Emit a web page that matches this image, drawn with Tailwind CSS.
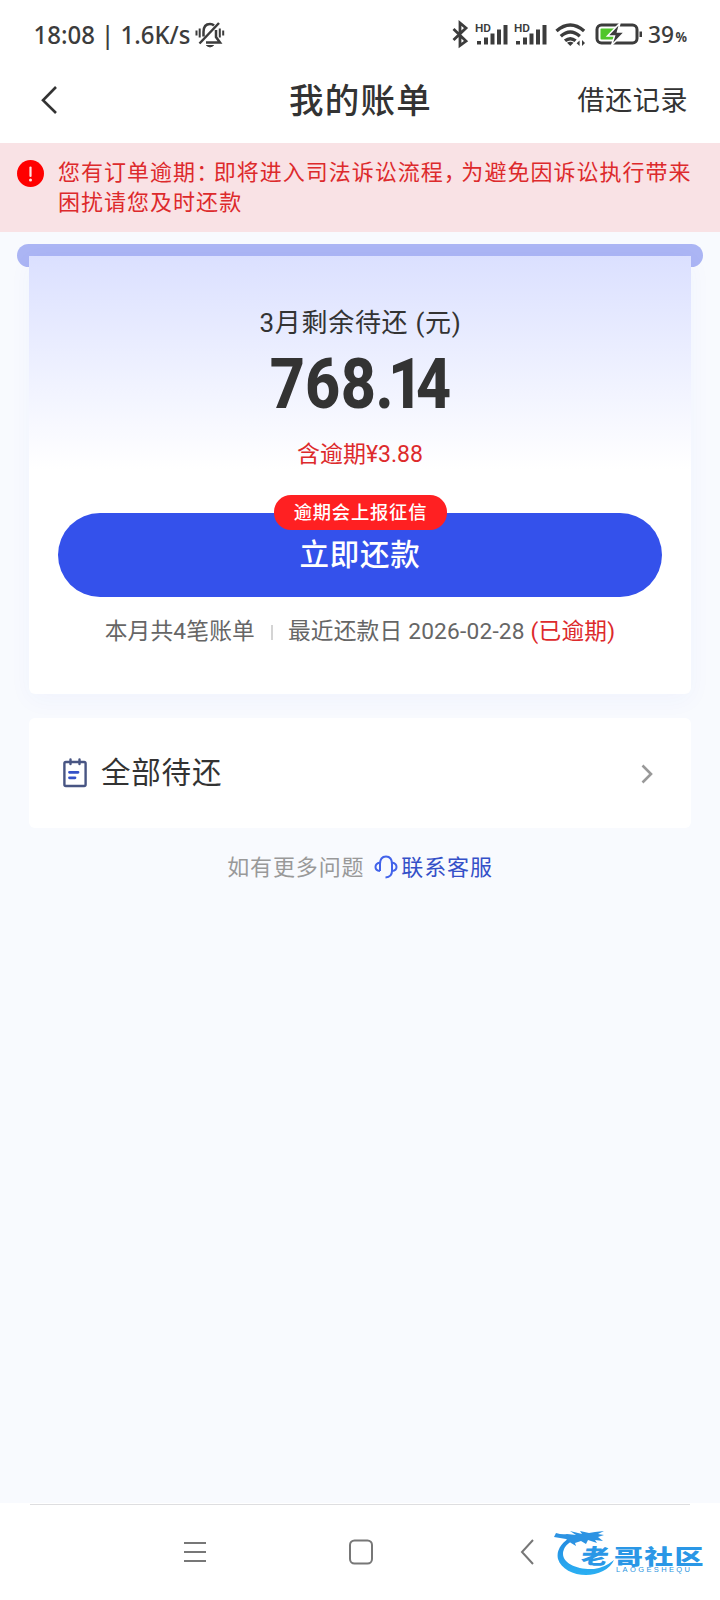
<!DOCTYPE html>
<html lang="zh-CN">
<head>
<meta charset="utf-8">
<title>我的账单</title>
<script src="https://cdn.jsdelivr.net/npm/@tailwindcss/browser@4"></script>
</head>
<body class="flex h-[1600px] w-[720px] flex-col overflow-hidden bg-[#f8fafe] font-['Roboto','Noto_Sans_CJK_SC',sans-serif] text-[#333] whitespace-nowrap">

<!-- status bar -->
<header class="flex h-[143px] shrink-0 flex-col bg-white">
  <div class="flex h-[69px] items-center justify-between pr-[32px] pl-[33px]">
    <div class="flex items-center gap-[4px]">
      <svg class="h-[40px] w-[158px] overflow-visible" viewBox="0 -5 158 40" fill="#3c3c3c"><text x="0.500" y="24" font-family="Noto Sans" font-weight="500" font-size="25.5" textLength="157" lengthAdjust="spacingAndGlyphs">18:08 | 1.6K/s</text></svg>
      <svg class="h-[28px] w-[30px]" viewBox="0 0 30 28" fill="none" stroke="#3c3c3c" stroke-width="2.500"><path d="M4.500 22.500 24 2"/><path d="M8.500 15.500V11C8.500 5.500 11 3 15 3Q17.500 3 19 4.500"/><path d="M21 9v7l4 5.500H11" /><path d="M11.500 24.500q3.500 3 7 0z" fill="#3c3c3c" stroke-width="1"/><path d="M4.700 7.500v9M1.500 9.500v5M24.800 7.500v9M28.200 9.500v5" stroke-width="2"/></svg>
    </div>
    <svg class="h-[40px] w-[238px]" viewBox="450 15 238 40">
      <path d="M453.500 29 466 41l-6 4.500V23l6 5-12.500 12" fill="none" stroke="#3c3c3c" stroke-width="2.800"/>
      <g fill="#3c3c3c">
        <text x="475" y="32" font-family="Roboto" font-weight="600" font-size="10.500" textLength="16" lengthAdjust="spacingAndGlyphs">HD</text>
        <path d="M477 41h4v3.500h-4zM484 37.500h4v7h-4zM490.500 33.500h4v11h-4zM497 29.500h4v15h-4zM503.500 25h4v19.500h-4z"/>
        <text x="514" y="32" font-family="Roboto" font-weight="600" font-size="10.500" textLength="16" lengthAdjust="spacingAndGlyphs">HD</text>
        <path d="M516 41h4v3.500h-4zM523 37.500h4v7h-4zM529.500 33.500h4v11h-4zM536 29.500h4v15h-4zM542.500 25h4v19.500h-4z"/>
      </g>
      <g fill="none" stroke="#3c3c3c" stroke-width="3.400"><path d="M556.500 31q13.800-12 27.600 0M560.800 36.300q9.500-8.500 19 0M565 40.800q5.300-4.300 10.600 0"/></g>
      <path d="M567 42.800q3.300-2.200 6.600 0l-3.300 3.300zM579.600 40.500v5.500l-3-2.800zM582 46v-6l3 3z" fill="#3c3c3c"/>
      <rect x="597" y="25" width="40" height="18" rx="4.500" fill="none" stroke="#3c3c3c" stroke-width="3"/>
      <path d="M639.500 31.500h2.500v5.500h-2.500z" fill="#3c3c3c"/>
      <rect x="600.500" y="28.500" width="16" height="11" rx="1" fill="#51c62b"/>
      <path d="m620 23-12.500 13h7l-3 9.500L624.500 32h-7z" fill="#3c3c3c" stroke="#fff" stroke-width="1.500"/>
      <text x="648" y="43" fill="#3c3c3c" font-family="Noto Sans" font-size="23" font-weight="500" textLength="26" lengthAdjust="spacingAndGlyphs">39</text>
      <text x="675.500" y="42" fill="#3c3c3c" font-family="Noto Sans" font-size="14" font-weight="700" textLength="11.500" lengthAdjust="spacingAndGlyphs">%</text>
    </svg>
  </div>
  <div class="grid h-[62px] grid-cols-[1fr_auto_1fr] items-center pr-[32px] pl-[40px]">
    <svg class="h-[28px] w-[18px]" viewBox="0 0 18 28" fill="none" stroke="#333" stroke-width="2.600"><path d="M16 1 3 14.300 16 27"/></svg>
    <h1 class="mt-px -ml-[7px] text-[34.5px] leading-[50px] font-medium tracking-[1.3px]">我的账单</h1>
    <div class="mt-[2px] text-right text-[27px] leading-[40px] tracking-[0.6px]">借还记录</div>
  </div>
</header>

<!-- overdue notice -->
<section class="flex h-[89px] shrink-0 gap-[14px] bg-[#f9e2e5] pt-[14px] pl-[17px] text-[22px] leading-[30px] tracking-[1.02px] text-[#dd2a2c]">
  <svg class="mt-[3px] h-[27px] w-[27px]" viewBox="0 0 27 27"><circle cx="13.500" cy="13.500" r="13.500" fill="#f00"/><path d="M13.500 7.500v8.500" stroke="#ffe5e5" stroke-width="2.200" stroke-linecap="round"/><circle cx="13.500" cy="20" r="1.500" fill="#ffe5e5"/></svg>
  <div class="pt-px">
    <p>您有订单逾期<span class="tracking-[-4.5px]">：</span>即将进入司法诉讼流程<span class="tracking-[-4.5px]">，</span>为避免因诉讼执行带来</p>
    <p>困扰请您及时还款</p>
  </div>
</section>

<main class="flex grow flex-col items-center pt-[12px]">
  <!-- current bill -->
  <div class="h-[23px] w-[686px] shrink-0 rounded-full bg-[#abb5f4]"></div>
  <section class="z-10 -mt-[11px] flex h-[438px] w-[662px] shrink-0 flex-col items-center rounded-b-[6px] bg-white bg-linear-to-b from-[#dbe0ff] to-white to-[214px] shadow-[0_6px_24px_rgba(52,81,235,0.04)]">
    <p class="mt-[47px] ml-px text-[26px] leading-[40px] tracking-[0.7px]">3月剩余待还 (元)</p>
    <svg class="mt-[3px] h-[80px] w-[190px] overflow-visible" viewBox="265 345 190 80" fill="#333"><text y="407" transform="translate(265 0) scale(.86 1)" x="5.500 46.500 88 128.500 143 175.500" font-family="Roboto" font-weight="800" font-size="71">768.14</text></svg>
    <p class="mt-[14px] text-[23px] leading-[30px] text-[#dd2a2c]">含逾期¥3.88</p>
    <div class="relative mt-[43px] flex h-[84px] w-[604px] items-center justify-center rounded-full bg-[#3451eb] text-[29.5px] font-medium tracking-[0.8px] text-white">
      <span class="mt-px">立即还款</span>
      <span class="absolute -top-[18px] left-[216px] flex h-[35px] w-[173px] items-center justify-center rounded-[17px] bg-[#ff2022] text-[18.3px] font-medium">逾期会上报征信</span>
    </div>
    <div class="mt-[20px] flex items-center text-[22.7px] leading-[30px] tracking-[0.2px] text-[#666]">
      <span>本月共4笔账单</span>
      <span class="mr-[15px] ml-[16px] h-[15px] w-[2px] bg-[#d4d4d4]"></span>
      <span>最近还款日 2026-02-28 <span class="text-[#dd2a2c]">(已逾期)</span></span>
    </div>
  </section>

  <!-- all outstanding -->
  <section class="mt-[24px] flex h-[110px] w-[662px] shrink-0 items-center rounded-[6px] bg-white pr-[38px] pl-[34px]">
    <svg class="h-[30px] w-[24px]" viewBox="0 0 24 30" fill="none" stroke="#485583" stroke-width="2.400" stroke-linejoin="round" stroke-linecap="round"><rect x="1.400" y="4" width="21.200" height="24" rx="1.500"/><path d="M7.500 1.500v4.500M16.500 1.500v4.500"/><path d="M6.500 14.300h8.500M6.500 19.800h5.500" stroke="#3451c8" stroke-width="2.800"/></svg>
    <span class="ml-[14px] grow text-[29.5px] leading-[40px] tracking-[0.8px]">全部待还</span>
    <svg class="mt-[2px] h-[20px] w-[12px]" viewBox="0 0 12 20" fill="none" stroke="#999" stroke-width="2.600"><path d="m1.500 1.500 8.500 8.500-8.500 8.500"/></svg>
  </section>

  <div class="mt-[25px] flex items-center text-[22px] leading-[30px] tracking-[0.85px] text-[#999]">
    <span>如有更多问题</span>
    <svg class="mr-[3px] ml-[10px] h-[24px] w-[24px] -translate-y-px" viewBox="0 0 24 24" fill="none" stroke="#4263ea" stroke-width="2"><path d="M6 16V9q0-7.500 6-7.500T18 9v7q0 6-6.500 6.500"/><path d="M6 7.500q-4.500 1-4.500 4.500T6 16M18 7.500q4.500 1 4.500 4.500T18 16"/></svg>
    <span class="text-[#3450c8]">联系客服</span>
  </div>
</main>

<!-- system navigation -->
<footer class="flex h-[97px] shrink-0 flex-col items-center bg-white">
  <div class="mt-px h-px w-[660px] shrink-0 bg-[#dedee0]"></div>
  <div class="flex h-[94px] w-full items-center pl-[184px]">
    <svg class="h-[26px] w-[22px]" viewBox="0 0 22 26" stroke="#777" stroke-width="2"><path d="M0 4h22M0 13h22M0 22h22"/></svg>
    <svg class="ml-[143px] h-[26px] w-[24px]" viewBox="0 0 24 26" fill="none" stroke="#777" stroke-width="2"><rect x="1" y="1.500" width="22" height="23" rx="4.500"/></svg>
    <svg class="ml-[147px] h-[26px] w-[14px]" viewBox="0 0 14 26" fill="none" stroke="#777" stroke-width="2"><path d="M13 1 2 13l11 12"/></svg>
    <svg class="ml-[20px] h-[54px] w-[152px]" viewBox="554 1526 152 54">
      <defs><linearGradient id="wm" x1="0" y1="0" x2="0" y2="1"><stop offset="0" stop-color="#2387de"/><stop offset="1" stop-color="#2bb0f3"/></linearGradient></defs>
      <path d="M573 1537C561 1543 556 1552 558 1560C562 1574 586 1581 603 1572Q611 1568 614 1561Q604 1569 594 1570C577 1571 563 1564 563 1555Q563 1545 577 1540Z" fill="url(#wm)"/>
      <path d="M556 1534q6 2 11 1l9 1-6-4 12 3-2-3 9 2 6-1 9-1-6 3 6 1-6 2 5 4-8-1 2 3-9-3-2 4-5-3-6 2 1 3-5-3-5-4-12-2z" fill="#2c93e3"/>
      <g fill="#2a97e6" font-family="Noto Sans CJK SC" font-weight="900">
        <text transform="translate(580 1565) skewX(-10) scale(1.3 1)" font-size="21">老</text>
        <text transform="translate(614 1565) scale(1.38 1)" x="0 22 43.800" font-size="21">哥社区</text>
      </g>
      <text x="616" y="1573" font-family="Liberation Sans" font-size="7.500" fill="#2b94e0" textLength="74">LAOGESHEQU</text>
    </svg>
  </div>
</footer>
</body>
</html>
